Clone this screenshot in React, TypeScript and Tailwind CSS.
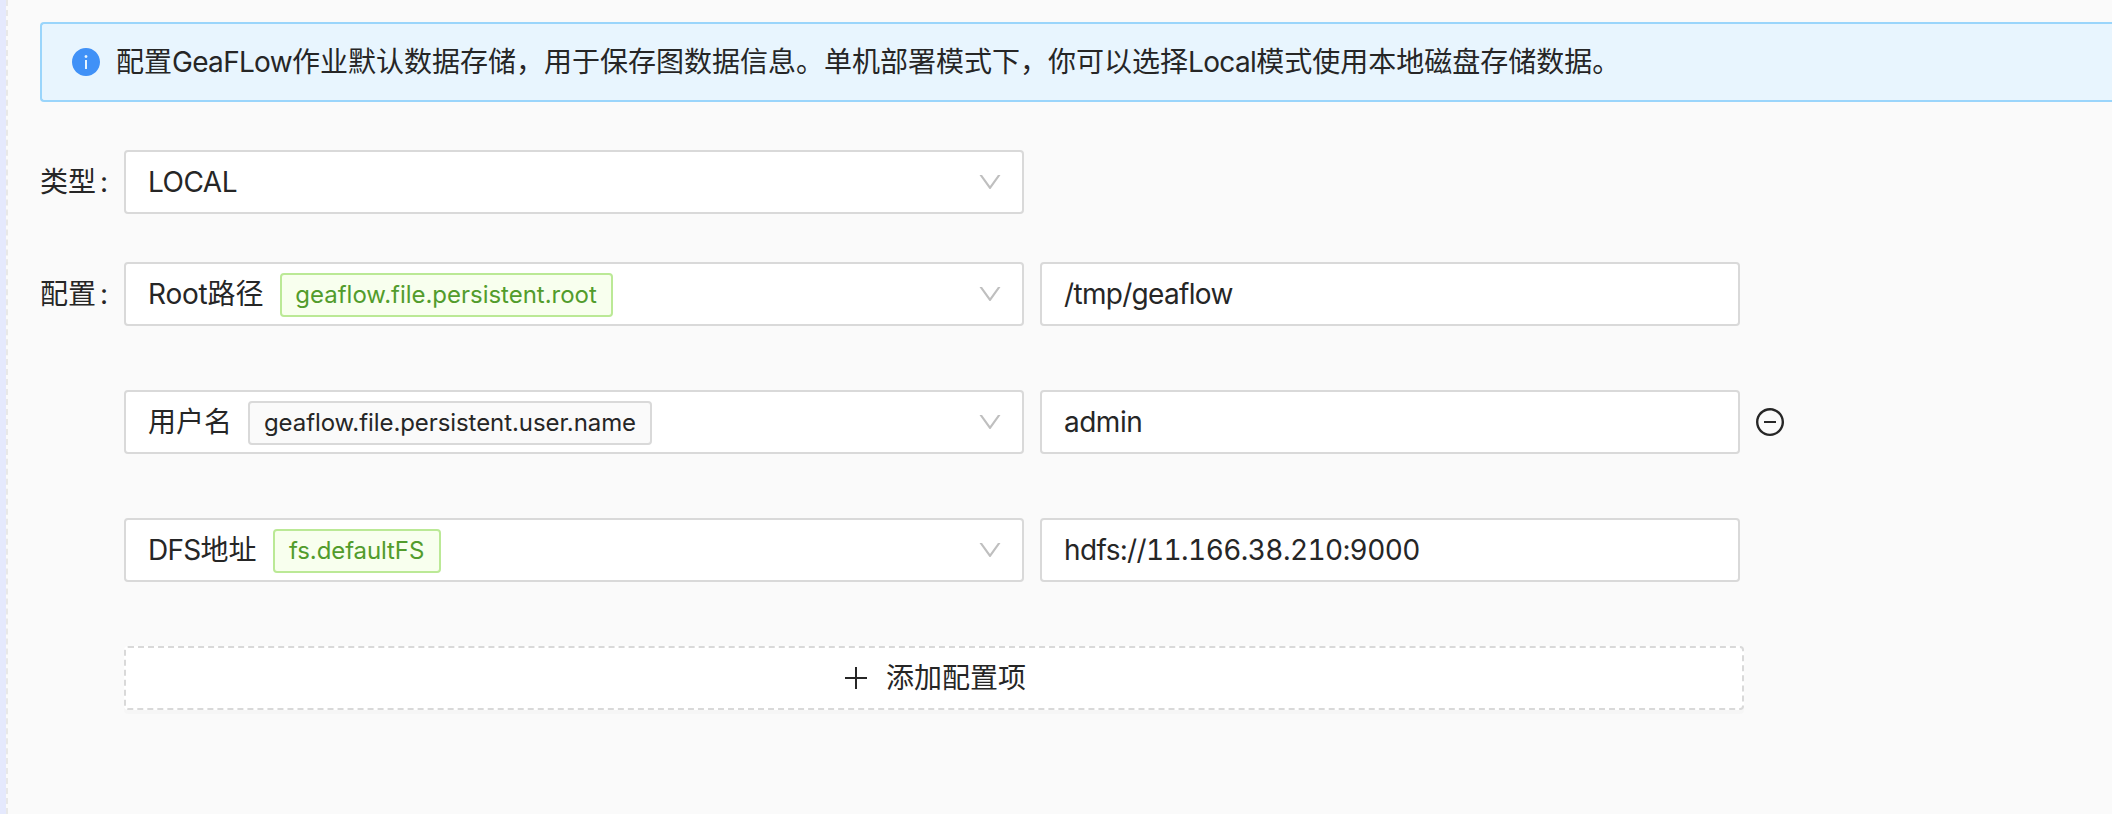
import type { ReactNode } from "react";
import { AiFillInfoCircle, AiOutlineDown, AiOutlineMinusCircle } from "react-icons/ai";

type TagColor = "green" | "default";

interface ConfigItem {
  name: ReactNode;
  tag: string;
  tagClass: string;
  color: TagColor;
  value: string;
  valueClass: string;
  removable?: boolean;
}

const tagColors: Record<TagColor, string> = {
  green: "border-[#bbe996] bg-[#f8ffee] text-[#529c2c]",
  default: "border-[#d9d9d9] bg-[#fafafa] text-[#262626]",
};

const items: ConfigItem[] = [
  {
    name: <><span className="tracking-[-0.2px]">Root</span>路径</>,
    tag: "geaflow.file.persistent.root",
    tagClass: "w-[333px] tracking-[-0.02px]",
    color: "green",
    value: "/tmp/geaflow",
    valueClass: "tracking-[-0.68px]",
  },
  {
    name: "用户名",
    tag: "geaflow.file.persistent.user.name",
    tagClass: "w-[404px] tracking-[-0.08px]",
    color: "default",
    value: "admin",
    valueClass: "tracking-[-0.5px]",
    removable: true,
  },
  {
    name: <><span className="tracking-[-0.7px]">DFS</span>地址</>,
    tag: "fs.defaultFS",
    tagClass: "w-[168px] tracking-[-0.1px]",
    color: "green",
    value: "hdfs://11.166.38.210:9000",
    valueClass: "tabular-nums tracking-[-0.57px]",
  },
];

function Select({ children }: { children: ReactNode }) {
  return (
    <div className="flex h-16 w-[900px] shrink-0 items-center rounded-[4px] border-2 border-[#d9d9d9] bg-white pr-[18px] pl-[22px]">
      {children}
      <AiOutlineDown className="ml-auto size-7 text-[#bfbfbf]" />
    </div>
  );
}

function Label({ children }: { children: ReactNode }) {
  return (
    <div className="flex h-16 w-[84px] shrink-0 items-center">
      <span>{children}</span>
      <span className="ml-1">:</span>
    </div>
  );
}

function PlusIcon() {
  return (
    <svg viewBox="0 0 22 22" className="size-[22px]" fill="none" stroke="currentColor" strokeWidth="2">
      <path d="M11 0v22M0 11h22" />
    </svg>
  );
}

export default function App() {
  return (
    <div className="flex h-[814px] w-full overflow-hidden bg-[#fafafa] font-['Inter','Noto_Sans_CJK_SC',sans-serif] text-[28px] leading-[44px] whitespace-nowrap text-[#262626]">
      <div className="w-1.5 shrink-0 bg-[#e5e9fd]" />
      <main className="flex grow flex-col border-l-2 border-dashed border-[#e8e8e8] pt-[22px] pl-8">
        <div className="flex h-20 items-center rounded-l-[4px] border-2 border-r-0 border-[#9ad5fb] bg-[#e8f5fe] pl-7">
          <AiFillInfoCircle className="size-8 text-[#4091f7]" />
          <span className="ml-3.5">
            配置<span className="tracking-[-0.7px]">GeaFLow</span>
            作业默认数据存储，用于保存图数据信息。单机部署模式下，你可以选择
            <span className="tracking-[-0.6px]">Local</span>模式使用本地磁盘存储数据。
          </span>
        </div>

        <div className="mt-12 flex">
          <Label>类型</Label>
          <Select>
            <span className="tracking-[-0.5px]">LOCAL</span>
          </Select>
        </div>

        <div className="mt-12 flex">
          <Label>配置</Label>
          <div className="flex flex-col gap-16">
            {items.map((item) => (
              <div key={item.tag} className="flex items-center">
                <Select>
                  <span>{item.name}</span>
                  <span
                    className={`mt-0.5 ml-4 flex h-11 items-center justify-center rounded-[4px] border-2 text-[24px] ${item.tagClass} ${tagColors[item.color]}`}
                  >
                    {item.tag}
                  </span>
                </Select>
                <div className="ml-4 flex h-16 w-[700px] items-center rounded-[4px] border-2 border-[#d9d9d9] bg-white px-[22px]">
                  <span className={item.valueClass}>{item.value}</span>
                </div>
                {item.removable && <AiOutlineMinusCircle className="ml-3.5 size-8" />}
              </div>
            ))}
            <button className="flex h-16 w-[1620px] items-center justify-center rounded-[4px] border-2 border-dashed border-[#d9d9d9] bg-white shadow-[0_4px_0_rgba(0,0,0,0.016)]">
              <span className="flex items-center gap-[19px] pl-[3px]">
                <PlusIcon />
                <span>添加配置项</span>
              </span>
            </button>
          </div>
        </div>
      </main>
    </div>
  );
}
